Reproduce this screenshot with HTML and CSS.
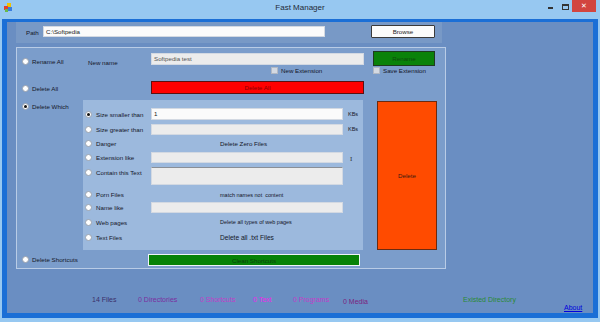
FILE: index.html
```html
<!DOCTYPE html>
<html lang="en">
<head>
    <meta charset="UTF-8">
    <title>Fast Manager</title>
    <link rel="stylesheet" href="styles.css">
</head>
<body>
<div class="window">
    <div class="titlebar">
        <svg class="app-icon" width="9" height="9" viewBox="0 0 9 9">
            <rect x="3" y="0" width="4" height="4" fill="#f2c200"/>
            <rect x="0" y="3" width="4" height="4" fill="#e2412c"/>
            <rect x="4" y="4" width="4" height="4" fill="#3b7ddf"/>
            <rect x="1" y="6" width="3" height="3" fill="#69b94a"/>
        </svg>
        <span class="title">Fast Manager</span>
        <div class="controls">
            <span class="btn-min"></span>
            <span class="btn-max"></span>
            <span class="btn-close">&#x2715;</span>
        </div>
    </div>

    <div class="frame">
        <div class="client">
            <!-- Path -->
            <div class="path-panel">
                <span class="path-label">Path</span>
                <div class="textbox path-box">C:\Softpedia</div>
                <button class="btn-browse">Browse</button>
            </div>

            <!-- Options -->
            <div class="main-panel">
                <div class="row row-rename">
                    <label class="opt"><span class="radio"></span>Rename All</label>
                    <span class="new-name">New name</span>
                    <div class="textbox disabled wide">Softpedia test</div>
                    <button class="btn-rename">Rename</button>
                </div>
                <div class="row row-checks">
                    <label class="check new-ext"><span class="box"></span>New Extension</label>
                    <label class="check"><span class="box"></span>Save Extension</label>
                </div>
                <div class="row row-delall">
                    <label class="opt"><span class="radio"></span>Delete All</label>
                    <button class="bar-red">Delete All</button>
                </div>
                <div class="row row-which">
                    <label class="opt"><span class="radio checked"></span>Delete Which</label>
                    <div class="inner-panel">
                        <div class="irow r1">
                            <label class="iopt"><span class="radio checked"></span>Size smaller than</label>
                            <div class="textbox field">1</div>
                            <span class="unit">KBs</span>
                        </div>
                        <div class="irow r2">
                            <label class="iopt"><span class="radio"></span>Size greater than</label>
                            <div class="textbox field disabled"></div>
                            <span class="unit">KBs</span>
                        </div>
                        <div class="irow r3">
                            <label class="iopt"><span class="radio"></span>Danger</label>
                            <span class="note">Delete Zero Files</span>
                        </div>
                        <div class="irow r4">
                            <label class="iopt"><span class="radio"></span>Extension like</label>
                            <div class="textbox field disabled"></div>
                            <span class="ibeam">I</span>
                        </div>
                        <div class="irow r5">
                            <label class="iopt"><span class="radio"></span>Contain this Text</label>
                            <div class="textbox field area disabled"></div>
                        </div>
                        <div class="irow r6">
                            <label class="iopt"><span class="radio"></span>Porn Files</label>
                            <span class="note small">match names not&nbsp; content</span>
                        </div>
                        <div class="irow r7">
                            <label class="iopt"><span class="radio"></span>Name like</label>
                            <div class="textbox field disabled"></div>
                        </div>
                        <div class="irow r8">
                            <label class="iopt"><span class="radio"></span>Web pages</label>
                            <span class="note small">Delete all types of web pages</span>
                        </div>
                        <div class="irow r9">
                            <label class="iopt"><span class="radio"></span>Text Files</label>
                            <span class="note big">Delete all .txt Files</span>
                        </div>
                    </div>
                    <button class="btn-delete">Delete</button>
                </div>
                <div class="row row-short">
                    <label class="opt"><span class="radio"></span>Delete Shortcuts</label>
                    <button class="bar-green">Clean Shortcuts</button>
                </div>
            </div>

            <!-- Contadores -->
            <div class="status">
                <span class="s-files">14 Files</span>
                <span class="s-dirs">0 Directories</span>
                <span class="s-short">0 Shortcuts</span>
                <span class="s-text">0 Text</span>
                <span class="s-prog">0 Programs</span>
                <span class="s-media">0 Media</span>
                <span class="s-exist">Existed Directory</span>
                <a class="about" href="#">About</a>
            </div>
        </div>
    </div>
</div>
</body>
</html>
```

FILE: styles.css
```css
* {
    box-sizing: border-box;
}

body {
    margin: 0;
    background-color: #97c8f1;
    font-family: 'Liberation Sans', Arial, sans-serif;
    font-size: 6.2px;
    color: #141628;
}

button {
    font-family: inherit;
    font-size: 6.2px;
    padding: 0;
    cursor: pointer;
}

/* Barra de titulo */
.titlebar {
    display: grid;
    grid-template-columns: 1fr auto 1fr;
    height: 19px;
}

.app-icon {
    margin: 3px 0 0 4px;
}

.title {
    font-size: 8px;
    line-height: 16px;
    color: #1f2a38;
}

.controls {
    justify-self: end;
    display: flex;
    align-items: flex-start;
    margin-right: 4px;
}

.btn-min {
    width: 5px;
    height: 2px;
    background-color: #333;
    margin: 7px 9px 0 0;
}

.btn-max {
    width: 7px;
    height: 6px;
    border: 1px solid #333;
    border-top-width: 2px;
    margin: 4px 3px 0 0;
}

.btn-close {
    width: 24px;
    height: 12px;
    background-color: #d2453f;
    color: #fff;
    font-size: 7px;
    line-height: 12px;
    text-align: center;
}

/* Moldura */
.frame {
    margin: 0 2px;
    border: 5px solid #1b6fd6;
    border-top-width: 3px;
}

.client {
    height: 291px;
    background-color: #6a8ec2;
    padding-left: 9px;
}

/* Path */
.path-panel {
    display: flex;
    align-items: flex-start;
    width: 426px;
    height: 21px;
    background-color: #7899c6;
    padding-left: 10px;
}

.path-label {
    width: 17px;
    margin-top: 7px;
    line-height: 8px;
}

.textbox {
    background-color: #fbfbfb;
    border: 1px solid #d3d9e2;
    padding-left: 2px;
    line-height: 9px;
    color: #222;
    white-space: nowrap;
}

.textbox.disabled {
    background-color: #ececec;
    color: #555;
}

.path-box {
    width: 282px;
    height: 11px;
    margin-top: 4px;
}

.btn-browse {
    width: 64px;
    height: 13px;
    margin: 3px 0 0 46px;
    background-color: #fbfbfb;
    border: 1px solid #3a3a3a;
    border-radius: 1px;
    color: #222;
}

/* Painel principal */
.main-panel {
    width: 430px;
    height: 222px;
    margin-top: 4px;
    background-color: #7b9dcb;
    border: 1px solid #b9cce6;
}

.row {
    display: flex;
    align-items: flex-start;
}

.row-rename { height: 19px; }
.row-checks { height: 8px; }
.row-delall { height: 25px; }
.row-which  { height: 151px; }
.row-short  { height: 17px; }

.opt {
    display: flex;
    align-items: center;
    gap: 3px;
    width: 66px;
    height: 8px;
    padding-left: 5px;
    white-space: nowrap;
}

.row-rename .opt,
.row-delall .opt { margin-top: 9px; }
.row-which .opt  { margin-top: 2px; }
.row-short .opt  { margin-top: 4px; }

.radio {
    flex-shrink: 0;
    width: 7px;
    height: 7px;
    border-radius: 50%;
    background-color: #fff;
    border: 1px solid #9aa2ae;
}

.radio.checked::after {
    content: '';
    display: block;
    width: 3px;
    height: 3px;
    margin: 1px;
    border-radius: 50%;
    background-color: #111;
}

.new-name {
    width: 68px;
    padding-left: 5px;
    margin-top: 11px;
    line-height: 8px;
}

.wide {
    width: 213px;
    height: 12px;
    margin-top: 5px;
    line-height: 10px;
}

.btn-rename {
    width: 62px;
    height: 15px;
    margin: 3px 0 0 9px;
    background-color: #0a820a;
    border: 1px solid #1f3a1f;
    color: #0d4a0d;
}

.check {
    display: flex;
    align-items: center;
    gap: 3px;
    height: 7px;
    white-space: nowrap;
}

.new-ext {
    width: 102px;
    margin-left: 254px;
}

.box {
    width: 7px;
    height: 7px;
    background-color: #d3d9e2;
    border: 1px solid #b0b8c4;
}

.bar-red {
    width: 213px;
    height: 13px;
    margin: 6px 0 0 68px;
    background-color: #ff0000;
    border: 1px solid #5a1010;
    color: #8a0000;
}

.btn-delete {
    width: 60px;
    height: 149px;
    margin: 1px 0 0 14px;
    background-color: #ff4b00;
    border: 1px solid #6b2a10;
    color: #3a1a10;
}

.bar-green {
    width: 212px;
    height: 12px;
    margin: 3px 0 0 65px;
    background-color: #078207;
    border: 1px solid #eef2f8;
    color: #0c3f0c;
}

/* Painel interno */
.inner-panel {
    width: 280px;
    height: 150px;
    padding-top: 6px;
    background-color: #9cb9dd;
}

.irow {
    display: flex;
    align-items: center;
}

.r1 { height: 16px; }
.r2, .r3, .r4 { height: 14px; }
.r5 { height: 24px; align-items: flex-start; }
.r6 { height: 13px; }
.r7 { height: 12px; }
.r8 { height: 18px; }
.r9 { height: 12px; }

.iopt {
    display: flex;
    align-items: center;
    gap: 4px;
    width: 67px;
    height: 8px;
    padding-left: 2px;
    white-space: nowrap;
}

.r5 .iopt {
    margin-top: 4px;
}

.field {
    width: 192px;
    height: 11px;
    margin-left: 1px;
}

.r1 .field {
    height: 12px;
    line-height: 10px;
}

.area {
    height: 18px;
    margin-top: 3px;
    border-top-color: #8a8f96;
}

.unit {
    margin-left: 5px;
    font-size: 5.5px;
}

.ibeam {
    margin: 3px 0 0 7px;
    font-family: 'Liberation Serif', serif;
    font-size: 7px;
    color: #333;
}

.note {
    margin-left: 70px;
    white-space: nowrap;
}

.note.small {
    font-size: 5.5px;
}

.note.big {
    font-size: 6.6px;
}

/* Rodape */
.status {
    display: flex;
    height: 16px;
    margin: 27px 0 0 76px;
    font-size: 7px;
    line-height: 8px;
    white-space: nowrap;
}

.s-files { width: 46px; color: #3b2f6b; }
.s-dirs  { width: 62px; color: #7b2fa0; }
.s-short { width: 53px; color: #c23cc8; }
.s-text  { width: 40px; color: #ee22ee; }
.s-prog  { width: 50px; color: #c33bc9; }
.s-media { width: 120px; color: #7c1f80; padding-top: 2px; }
.s-exist { width: 101px; color: #2a8a35; }

.about {
    align-self: flex-end;
    color: #0000dd;
}
```
